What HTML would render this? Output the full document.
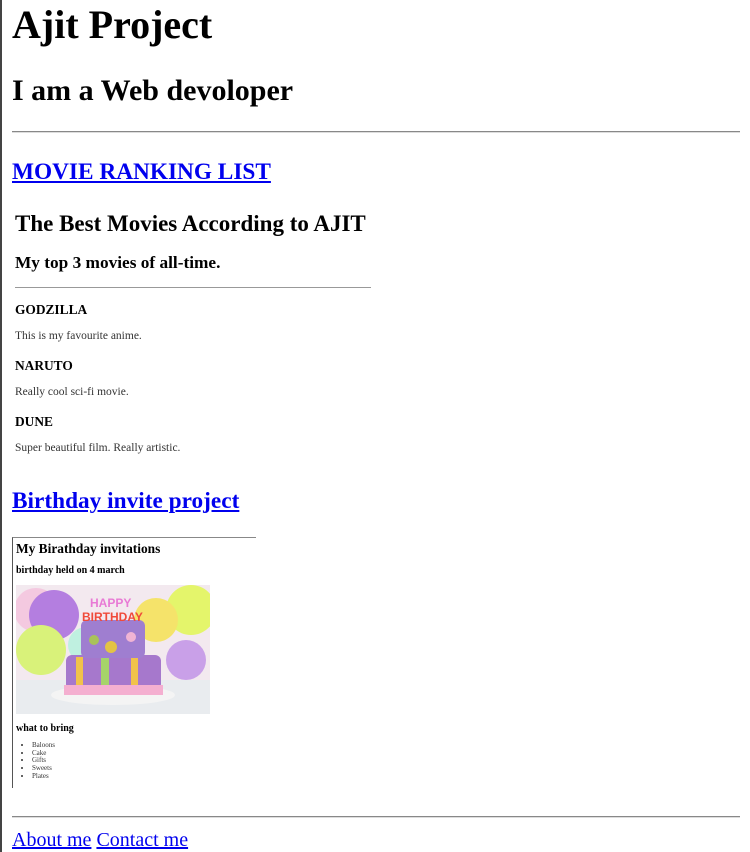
<!DOCTYPE html>
<html><head><meta charset="utf-8"><style>
body{margin:0;width:750px;height:852px;position:relative;background:#fff;font-family:"Liberation Serif",serif;color:#000;overflow:hidden}
.a{position:absolute;white-space:nowrap;line-height:1}
a{color:#0000ee;text-decoration:underline}
</style></head><body>
<div style="position:absolute;left:0;top:0;width:2px;height:852px;background:#444"></div>
<div class="a" style="left:12px;top:5px;font-size:40px;font-weight:bold">Ajit Project</div>
<div class="a" style="left:12px;top:76px;font-size:30px;font-weight:bold">I am a Web devoloper</div>
<div style="position:absolute;left:12px;top:131px;width:728px;height:0;border-top:1px solid #888;border-bottom:1px solid #ddd"></div>
<div class="a" style="left:12px;top:161px;font-size:23.3px;font-weight:bold"><a>MOVIE RANKING LIST</a></div>
<div class="a" style="left:15px;top:212px;font-size:23px;font-weight:bold">The Best Movies According to AJIT</div>
<div class="a" style="left:15px;top:254px;font-size:17.3px;font-weight:bold">My top 3 movies of all-time.</div>
<div style="position:absolute;left:15px;top:287px;width:356px;border-top:1px solid #999"></div>
<div class="a" style="left:15px;top:303px;font-size:13.4px;font-weight:bold">GODZILLA</div>
<div class="a" style="left:15px;top:331px;font-size:11.5px;color:#333">This is my favourite anime.</div>
<div class="a" style="left:15px;top:359px;font-size:13.4px;font-weight:bold">NARUTO</div>
<div class="a" style="left:15px;top:387px;font-size:11.5px;color:#333">Really cool sci-fi movie.</div>
<div class="a" style="left:15px;top:415px;font-size:13.4px;font-weight:bold">DUNE</div>
<div class="a" style="left:15px;top:443px;font-size:11.5px;color:#333">Super beautiful film. Really artistic.</div>
<div class="a" style="left:12px;top:490px;font-size:23.3px;font-weight:bold"><a>Birthday invite project</a></div>
<div style="position:absolute;left:12px;top:537px;width:243px;height:250px;border-top:1px solid #888;border-left:1px solid #555"></div>
<div class="a" style="left:16px;top:542px;font-size:13.4px;font-weight:bold">My Birathday invitations</div>
<div class="a" style="left:16px;top:566px;font-size:10px;font-weight:bold">birthday held on 4 march</div>
<svg style="position:absolute;left:16px;top:585px" width="194" height="129" viewBox="0 0 194 129">
<rect width="194" height="129" fill="#f3e9ef"/>
<circle cx="20" cy="25" r="22" fill="#f4c9e0"/><circle cx="38" cy="30" r="25" fill="#b47ee0"/>
<circle cx="25" cy="65" r="25" fill="#d9f27a"/><circle cx="175" cy="25" r="25" fill="#e4f56b"/>
<circle cx="140" cy="35" r="22" fill="#f5e36a"/><circle cx="170" cy="75" r="20" fill="#c9a0e8"/>
<circle cx="70" cy="60" r="18" fill="#bff0e0"/>
<rect y="95" width="194" height="34" fill="#e9ecef"/>
<ellipse cx="97" cy="110" rx="62" ry="10" fill="#f4f4f4"/>
<rect x="50" y="70" width="95" height="35" rx="6" fill="#a678cc"/>
<rect x="60" y="72" width="7" height="32" fill="#f1c24a"/><rect x="85" y="72" width="8" height="32" fill="#a6d36a"/><rect x="115" y="72" width="7" height="32" fill="#f1c24a"/>
<rect x="48" y="100" width="99" height="10" fill="#f4afd0"/>
<rect x="65" y="35" width="64" height="38" rx="6" fill="#9f7ed0"/>
<circle cx="78" cy="55" r="5" fill="#a9c25a"/><circle cx="95" cy="62" r="6" fill="#e3c345"/><circle cx="115" cy="52" r="5" fill="#f0b4d4"/>
<text x="74" y="22" font-size="12" font-weight="bold" fill="#e87ad5" font-family="Liberation Sans">HAPPY</text>
<text x="66" y="36" font-size="12" font-weight="bold" fill="#f04a3a" font-family="Liberation Sans">BIRTHDAY</text>
</svg>
<div class="a" style="left:16px;top:724px;font-size:10px;font-weight:bold">what to bring</div>
<ul style="position:absolute;left:16px;top:742px;margin:0;padding-left:16px;font-size:7px;line-height:7.7px;color:#333">
<li>Baloons</li><li>Cake</li><li>Gifts</li><li>Sweets</li><li>Plates</li></ul>
<div style="position:absolute;left:12px;top:816px;width:728px;border-top:1px solid #888;border-bottom:1px solid #ddd"></div>
<div class="a" style="left:12px;top:830px;font-size:20px"><a>About me</a> <a>Contact me</a></div>
</body></html>
